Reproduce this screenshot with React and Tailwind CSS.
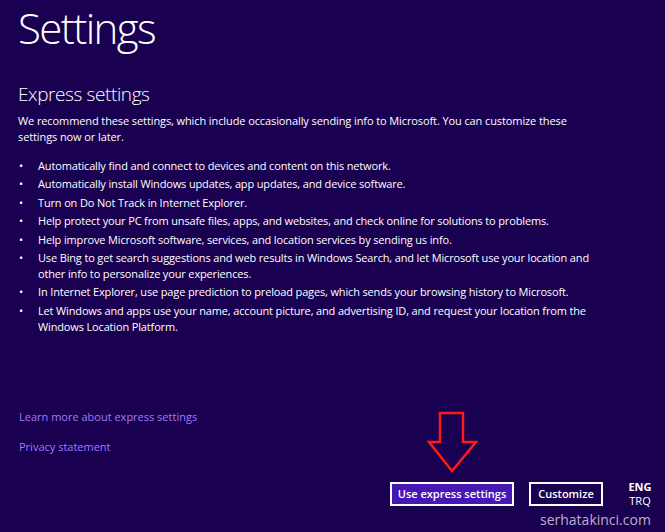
import React from 'react';

const items = [
  'Automatically find and connect to devices and content on this network.',
  'Automatically install Windows updates, app updates, and device software.',
  'Turn on Do Not Track in Internet Explorer.',
  'Help protect your PC from unsafe files, apps, and websites, and check online for solutions to problems.',
  'Help improve Microsoft software, services, and location services by sending us info.',
  'Use Bing to get search suggestions and web results in Windows Search, and let Microsoft use your location and other info to personalize your experiences.',
  'In Internet Explorer, use page prediction to preload pages, which sends your browsing history to Microsoft.',
  'Let Windows and apps use your name, account picture, and advertising ID, and request your location from the Windows Location Platform.',
];

function Arrow() {
  return (
    <svg className="absolute left-[426px] top-[410px]" width="52" height="64" viewBox="0 0 52 64">
      <path
        d="M14 3 H37 V32 H50 L26 61 L3 32 H14 Z"
        fill="none"
        stroke="#ff1a1a"
        strokeWidth="2.5"
        strokeLinejoin="miter"
      />
    </svg>
  );
}

export default function App() {
  return (
    <div
      className="relative w-[665px] h-[532px] overflow-hidden bg-[#1a0050] text-white flex flex-col"
      style={{ fontFamily: '"Open Sans", "Noto Sans", sans-serif' }}
    >
      <div className="pl-[18px]">
        <h1 className="text-[42px] font-light leading-[50px] mt-[3px] tracking-[-1.6px]">Settings</h1>
        <h2 className="text-[19px] font-light leading-[24px] mt-[29px] tracking-[-0.4px]">Express settings</h2>
        <p className="text-[11px] leading-[15.5px] mt-[7px] w-[560px] tracking-[-0.1px]">
          We recommend these settings, which include occasionally sending info to Microsoft. You can customize these settings now or later.
        </p>
        <ul className="mt-[14px] flex flex-col gap-[2.4px] text-[11px] leading-[16px] w-[600px] tracking-[-0.15px]">
          {items.map((t) => (
            <li key={t} className="flex">
              <span className="w-[20px] shrink-0 pl-[1px]">•</span>
              <span className="w-[560px]">{t}</span>
            </li>
          ))}
        </ul>
      </div>

      <div className="flex-1" />

      <div className="pl-[19px] flex flex-col gap-[14px] text-[11px] leading-[16px] text-[#a07aff]">
        <span>Learn more about express settings</span>
        <span>Privacy statement</span>
      </div>

      <div className="flex items-start justify-end h-[24px] mt-[27px] mb-[26px] pr-[12px]">
        <button className="h-[24px] w-[124px] bg-[#4617b4] border-2 border-white text-[11px] font-semibold">
          Use express settings
        </button>
        <button className="h-[24px] w-[74px] ml-[15px] border-2 border-white text-[11px] font-semibold">
          Customize
        </button>
        <div className="ml-[24px] -mt-[2px] flex flex-col items-center text-[11px] leading-[14px] w-[26px]">
          <span className="font-bold">ENG</span>
          <span>TRQ</span>
        </div>
      </div>

      <Arrow />
      <span className="absolute left-[540px] top-[510px] text-[14px] leading-[20px] text-white/70">
        serhatakinci.com
      </span>
    </div>
  );
}
